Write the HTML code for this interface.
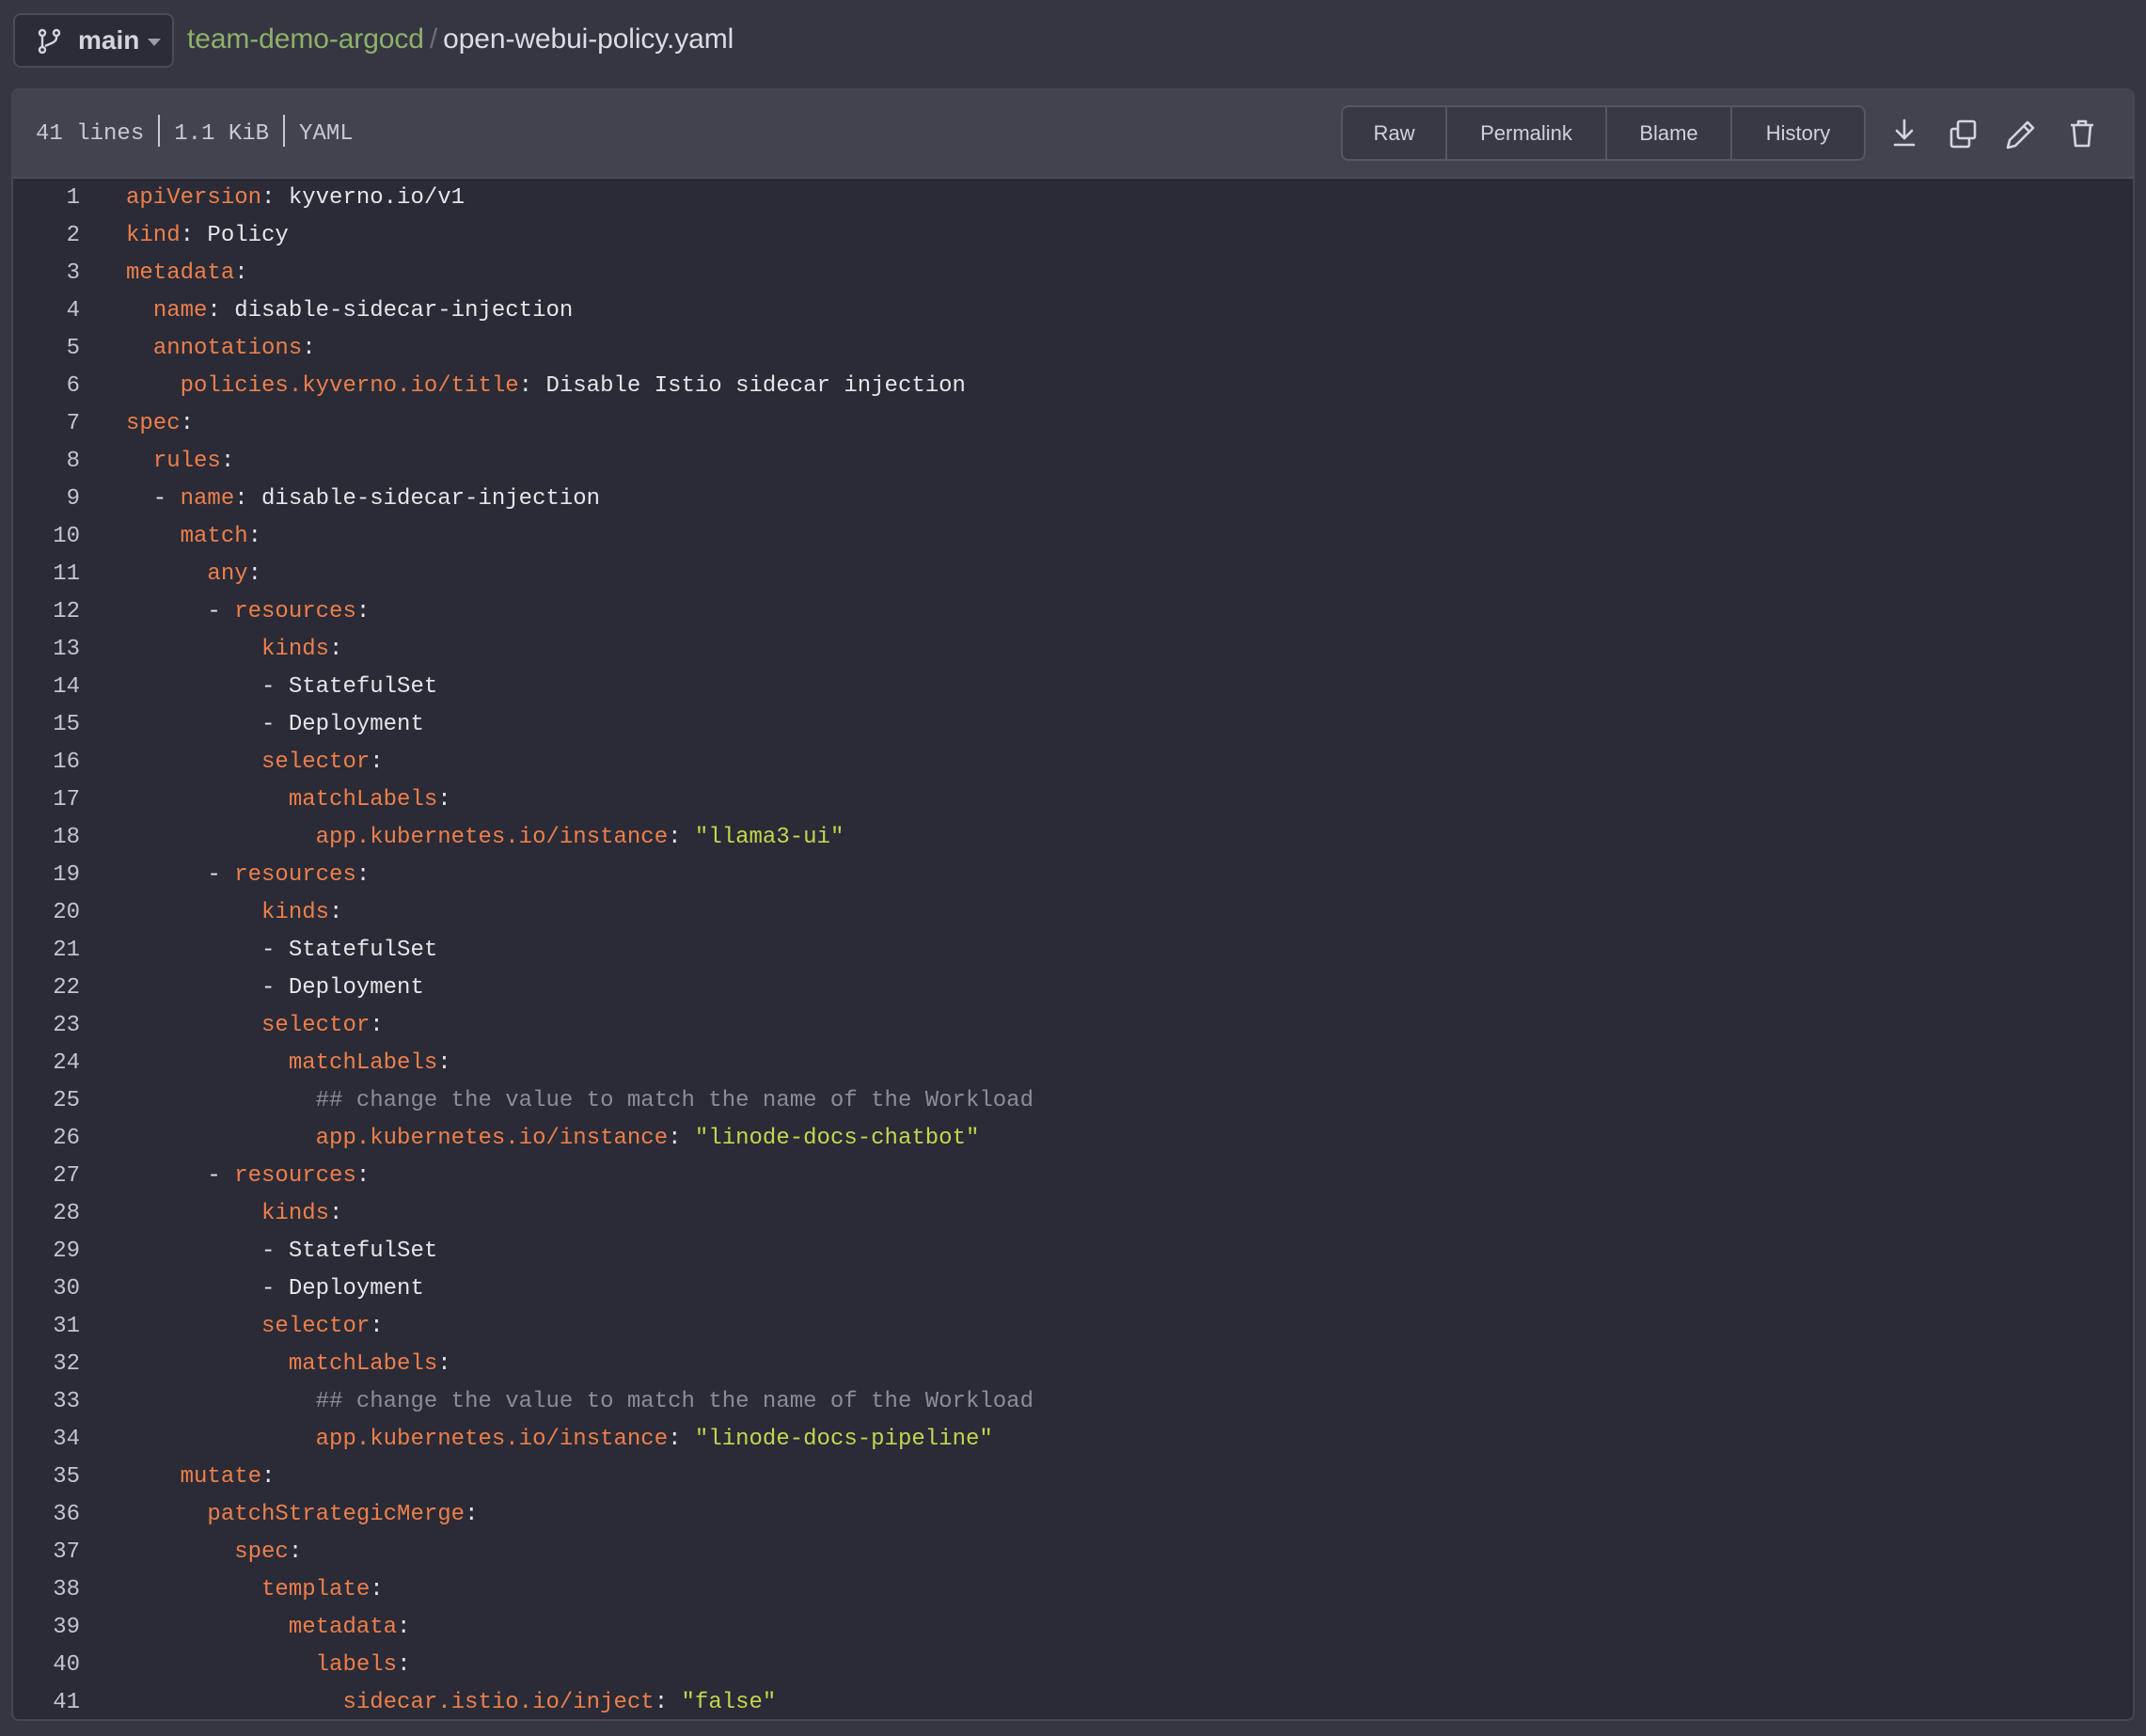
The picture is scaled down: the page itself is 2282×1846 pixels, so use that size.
<!DOCTYPE html>
<html><head><meta charset="utf-8"><style>
*{margin:0;padding:0;box-sizing:border-box}
body{width:2282px;height:1846px;background:#353642;font-family:"Liberation Sans",sans-serif;position:relative;overflow:hidden}
.branch{position:absolute;left:14px;top:14px;width:171px;height:58px;background:#2b2c37;border:2px solid #4a4b57;border-radius:8px}
.branch .t{position:absolute;left:67px;top:11px;font-size:28px;font-weight:bold;color:#d4d5dc}
.crumb{position:absolute;left:199px;top:25px;font-size:30px;color:#dcdde3;letter-spacing:-0.1px}
.crumb .a{color:#8fb06a}.crumb .s{color:#6d6e7a;margin:0 6px}
.box{position:absolute;left:12px;top:94px;width:2258px;height:1736px;border:2px solid #454652;border-radius:8px;background:#2a2b36;overflow:hidden}
.bar{position:absolute;left:0;top:0;right:0;height:94px;background:#42434f;border-bottom:2px solid #4c4d59}
.meta{position:absolute;left:24px;top:26px;font-family:"Liberation Mono",monospace;font-size:24px;color:#c7c8d0}
.meta i{display:inline-block;width:2px;height:34px;background:#c7c8d0;vertical-align:-8px;margin:0 15px}
.btns{position:absolute;left:1412px;top:16px;height:59px;width:558px;border:2px solid #55565f;border-radius:8px;background:#383945;display:flex}
.btns div{font-size:22px;color:#d0d1d8;display:flex;align-items:center;justify-content:center;border-right:2px solid #55565f;height:100%}
.btns div:last-child{border-right:none}
.ic{position:absolute;top:30px}
.code{position:absolute;left:0;top:95px;font-family:"Liberation Mono",monospace;font-size:24px;line-height:40px;color:#e6e6ea;white-space:pre}
.ln{position:absolute;left:0;top:0;width:71px;text-align:right;color:#c3c4cc}
.src{position:absolute;left:120px;top:0}
.k{color:#ee7f4b}.s{color:#c5d64e}.c{color:#8b8c99}
</style></head><body>
<div class="branch">
<svg style="position:absolute;left:24px;top:14px" width="26" height="28" viewBox="0 0 26 28" fill="none" stroke="#d4d5dc" stroke-width="2.4"><circle cx="5" cy="5" r="3"/><circle cx="5" cy="23" r="3"/><circle cx="20" cy="5" r="3"/><path d="M5 8v12M20 8v2c0 5-6 6-12 9"/></svg>
<div class="t">main</div>
<svg style="position:absolute;left:141px;top:25px" width="14" height="8"><path d="M0 0h14L7 8z" fill="#9a9ba5"/></svg>
</div>
<div class="crumb"><span class="a">team-demo-argocd</span><span class="s">/</span>open-webui-policy.yaml</div>
<div class="box">
<div class="bar">
<div class="meta">41 lines<i></i>1.1 KiB<i></i>YAML</div>
<div class="btns"><div style="width:111px">Raw</div><div style="width:170px">Permalink</div><div style="width:133px">Blame</div><div style="flex:1">History</div></div>
<svg class="ic" style="left:1998px" width="26" height="32" fill="none" stroke="#d4d5dc" stroke-width="2.6" stroke-linecap="round"><path d="M13 2v18M5 13l8 8 8-8M3 28h20"/></svg>
<svg class="ic" style="left:2058px" width="32" height="32" fill="none" stroke="#d4d5dc" stroke-width="2.6" stroke-linejoin="round"><rect x="10" y="3" width="18" height="18" rx="2"/><path d="M10 11H5a2 2 0 0 0-2 2v15a2 2 0 0 0 2 2h15a2 2 0 0 0 2-2v-7"/></svg>
<svg class="ic" style="left:2118px" width="34" height="34" fill="none" stroke="#d4d5dc" stroke-width="2.6" stroke-linejoin="round"><path d="M24 4l6 6L11 29l-8 2 2-8zM20 8l6 6"/></svg>
<svg class="ic" style="left:2186px" width="28" height="32" fill="none" stroke="#d4d5dc" stroke-width="2.6" stroke-linejoin="round"><path d="M2 7h24M10 7V3h8v4M5 7l2 22h14l2-22"/></svg>
</div>
<div class="code"><div class="ln">1
2
3
4
5
6
7
8
9
10
11
12
13
14
15
16
17
18
19
20
21
22
23
24
25
26
27
28
29
30
31
32
33
34
35
36
37
38
39
40
41</div><div class="src"><span class="k">apiVersion</span>: kyverno.io/v1
<span class="k">kind</span>: Policy
<span class="k">metadata</span>:
  <span class="k">name</span>: disable-sidecar-injection
  <span class="k">annotations</span>:
    <span class="k">policies.kyverno.io/title</span>: Disable Istio sidecar injection
<span class="k">spec</span>:
  <span class="k">rules</span>:
  - <span class="k">name</span>: disable-sidecar-injection
    <span class="k">match</span>:
      <span class="k">any</span>:
      - <span class="k">resources</span>:
          <span class="k">kinds</span>:
          - StatefulSet
          - Deployment
          <span class="k">selector</span>:
            <span class="k">matchLabels</span>:
              <span class="k">app.kubernetes.io/instance</span>: <span class="s">"llama3-ui"</span>
      - <span class="k">resources</span>:
          <span class="k">kinds</span>:
          - StatefulSet
          - Deployment
          <span class="k">selector</span>:
            <span class="k">matchLabels</span>:
              <span class="c">## change the value to match the name of the Workload</span>
              <span class="k">app.kubernetes.io/instance</span>: <span class="s">"linode-docs-chatbot"</span>
      - <span class="k">resources</span>:
          <span class="k">kinds</span>:
          - StatefulSet
          - Deployment
          <span class="k">selector</span>:
            <span class="k">matchLabels</span>:
              <span class="c">## change the value to match the name of the Workload</span>
              <span class="k">app.kubernetes.io/instance</span>: <span class="s">"linode-docs-pipeline"</span>
    <span class="k">mutate</span>:
      <span class="k">patchStrategicMerge</span>:
        <span class="k">spec</span>:
          <span class="k">template</span>:
            <span class="k">metadata</span>:
              <span class="k">labels</span>:
                <span class="k">sidecar.istio.io/inject</span>: <span class="s">"false"</span></div></div>
</div>
</body></html>
